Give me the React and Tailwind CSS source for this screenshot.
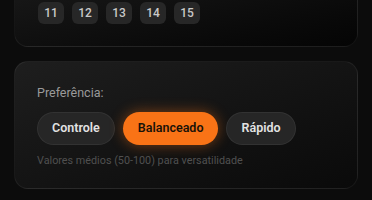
import React from "react";

const OPTIONS = ["Controle", "Balanceado", "Rápido"];

export default function App() {
  const active = "Balanceado";

  return (
    <div
      className="w-[372px] h-[200px] overflow-hidden bg-[#0c0c0c] px-[14px] flex flex-col gap-[14px]"
      style={{ fontFamily: "Roboto, 'Noto Sans', sans-serif" }}
    >
      {/* Top card (cut off) */}
      <div className="-mt-[30px] pt-[31px] pb-[22px] px-[23px] rounded-[14px] border border-white/[0.06] bg-gradient-to-br from-[#1b1b1b] to-[#050505]">
        <div className="flex gap-[8px]">
          {[11, 12, 13, 14, 15].map((n) => (
            <div
              key={n}
              className="w-[26px] h-[22px] rounded-[6px] bg-[#272727] flex items-center justify-center text-[12px] font-medium text-[#c9c9c9]"
            >
              {n}
            </div>
          ))}
        </div>
      </div>

      {/* Preference card */}
      <div className="h-[128px] px-[22px] pt-[23px] rounded-[14px] border border-white/[0.06] bg-gradient-to-br from-[#1e1e1e] to-[#0a0a0a]">
        <p className="text-[12.5px] leading-[16px] text-[#9a9a9a]">Preferência:</p>
        <div className="mt-[11px] flex gap-[8px]">
          {OPTIONS.map((o) =>
            o === active ? (
              <button
                key={o}
                className="h-[33px] px-[15px] rounded-full bg-[#f97316] text-[#1a1208] text-[12.5px] font-semibold shadow-[0_0_14px_rgba(249,115,22,0.45)]"
              >
                {o}
              </button>
            ) : (
              <button
                key={o}
                className="h-[33px] px-[15px] rounded-full bg-[#262626] shadow-[inset_0_0_0_1px_rgba(255,255,255,0.06)] text-[#e2e2e2] text-[12.5px] font-semibold"
              >
                {o}
              </button>
            )
          )}
        </div>
        <p className="mt-[9px] text-[10.8px] leading-[14px] text-[#505050]">
          Valores médios (50-100) para versatilidade
        </p>
      </div>
    </div>
  );
}
